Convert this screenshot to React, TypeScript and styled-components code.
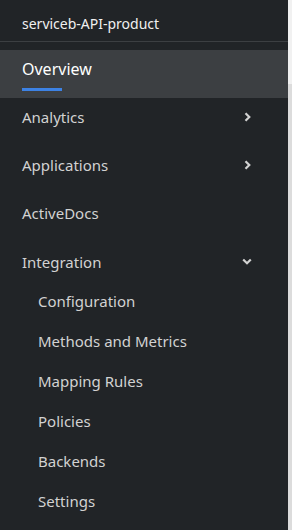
import React from 'react'
import styled, { createGlobalStyle } from 'styled-components'

const GlobalStyle = createGlobalStyle`
  html, body {
    margin: 0;
    padding: 0;
    background: #f0f0f0;
  }
  * {
    box-sizing: border-box;
  }
`

const subItems = [
  'Configuration',
  'Methods and Metrics',
  'Mapping Rules',
  'Policies',
  'Backends',
  'Settings',
]

function ChevronRight() {
  return (
    <svg width="7" height="10" viewBox="0 0 7 10">
      <polyline
        points="1.5,1.2 5.3,5 1.5,8.8"
        fill="none"
        stroke="#d2d2d2"
        strokeWidth="2.2"
      />
    </svg>
  )
}

function ChevronDown() {
  return (
    <svg width="10" height="7" viewBox="0 0 10 7">
      <polyline
        points="1.2,1.5 5,5.3 8.8,1.5"
        fill="none"
        stroke="#d2d2d2"
        strokeWidth="2.2"
      />
    </svg>
  )
}

export default function App() {
  return (
    <>
      <GlobalStyle />
      <Page>
        <Sidebar>
          <Header>serviceb-API-product</Header>
          <NavList>
            <NavItem $current>
              <span>Overview</span>
            </NavItem>
            <NavItem>
              <span>Analytics</span>
              <Toggle>
                <ChevronRight />
              </Toggle>
            </NavItem>
            <NavItem>
              <span>Applications</span>
              <Toggle>
                <ChevronRight />
              </Toggle>
            </NavItem>
            <NavItem>
              <span>ActiveDocs</span>
            </NavItem>
            <NavItem $expanded>
              <span>Integration</span>
              <Toggle>
                <ChevronDown />
              </Toggle>
            </NavItem>
            <SubList>
              {subItems.map(item => (
                <SubItem key={item}>{item}</SubItem>
              ))}
            </SubList>
          </NavList>
        </Sidebar>
        <ScrollTrack>
          <ScrollThumb />
        </ScrollTrack>
      </Page>
    </>
  )
}

const Page = styled.div`
  display: flex;
  width: 292px;
  height: 530px;
  font-family: 'Noto Sans', 'Open Sans', sans-serif;
`

const Sidebar = styled.nav`
  width: 288px;
  height: 100%;
  background-color: #212427;
  display: flex;
  flex-direction: column;
  overflow: hidden;
`

const Header = styled.div`
  height: 42px;
  padding: 5px 22px 0;
  display: flex;
  align-items: center;
  color: #f0f0f0;
  font-size: 14px;
  border-bottom: 1px solid #3c3f42;
`

const NavList = styled.div`
  padding-top: 8px;
  display: flex;
  flex-direction: column;
`

const NavItem = styled.div<{ $current?: boolean; $expanded?: boolean }>`
  position: relative;
  height: ${p => (p.$expanded ? '39px' : '48px')};
  padding: 0 22px ${p => (p.$expanded ? '0' : '10px')};
  display: flex;
  align-items: center;
  justify-content: space-between;
  color: ${p => (p.$current ? '#ffffff' : '#d2d2d2')};
  background-color: ${p => (p.$current ? '#3c3f42' : 'transparent')};
  font-size: ${p => (p.$current ? '16px' : '15px')};

  &::after {
    content: '';
    display: ${p => (p.$current ? 'block' : 'none')};
    position: absolute;
    left: 22px;
    bottom: 7px;
    width: 40px;
    height: 3px;
    background-color: #3d82e4;
  }
`

const Toggle = styled.span`
  width: 10px;
  margin-right: 14px;
  display: flex;
  justify-content: center;
  align-items: center;
`

const SubList = styled.div`
  display: flex;
  flex-direction: column;
`

const SubItem = styled.div`
  height: 40px;
  padding-left: 38px;
  display: flex;
  align-items: center;
  font-size: 15px;
  color: #d2d2d2;
`

const ScrollTrack = styled.div`
  width: 4px;
  height: 100%;
  padding-top: 84px;
  background-color: #f1f1f1;
  display: flex;
  flex-direction: column;
`

const ScrollThumb = styled.div`
  flex: 1;
  background-color: #dcdcdc;
`
